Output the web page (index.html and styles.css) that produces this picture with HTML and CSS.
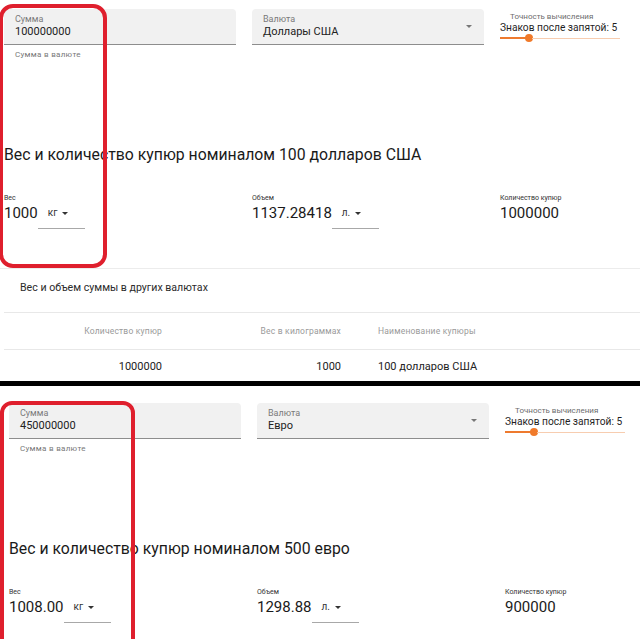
FILE: index.html
```html
<!DOCTYPE html>
<html lang="ru">
<head>
<meta charset="utf-8">
<title>Вес купюр</title>
<link rel="stylesheet" href="styles.css">
</head>
<body>
<div class="page">
  <section class="screen screen-a">
    <div class="form-row">
      <div class="col">
        <div class="field">
          <div class="field-text">
            <div class="field-label">Сумма</div>
            <div class="field-value">100000000</div>
          </div>
        </div>
        <div class="helper">Сумма в валюте</div>
      </div>
      <div class="col">
        <div class="field">
          <div class="field-text">
            <div class="field-label">Валюта</div>
            <div class="field-value">Доллары США</div>
          </div>
          <span class="arrow"></span>
        </div>
      </div>
      <div class="col col-slider">
        <div class="slider-label">Точность вычисления</div>
        <div class="slider-title">Знаков после запятой: 5</div>
        <div class="slider">
          <div class="track-active"></div>
          <div class="thumb"></div>
          <div class="track-rest"></div>
        </div>
      </div>
    </div>
    <h2 class="heading">Вес и количество купюр номиналом 100 долларов США</h2>
    <div class="results">
      <div class="result">
        <div class="r-label">Вес</div>
        <div class="r-line"><span class="r-value">1000</span><span class="unit">кг<span class="caret"></span></span></div>
      </div>
      <div class="result">
        <div class="r-label">Объем</div>
        <div class="r-line"><span class="r-value">1137.28418</span><span class="unit">л.<span class="caret"></span></span></div>
      </div>
      <div class="result">
        <div class="r-label">Количество купюр</div>
        <div class="r-line"><span class="r-value">1000000</span></div>
      </div>
    </div>
    <div class="others">
      <div class="others-title">Вес и объем суммы в других валютах</div>
      <table class="table">
        <thead>
          <tr><th class="c1">Количество купюр</th><th class="c2">Вес в килограммах</th><th class="c3">Наименование купюры</th></tr>
        </thead>
        <tbody>
          <tr><td class="c1">1000000</td><td class="c2">1000</td><td class="c3">100 долларов США</td></tr>
        </tbody>
      </table>
    </div>
  </section>
  <div class="black-bar"></div>
  <section class="screen screen-b">
    <div class="form-row">
      <div class="col">
        <div class="field">
          <div class="field-text">
            <div class="field-label">Сумма</div>
            <div class="field-value">450000000</div>
          </div>
        </div>
        <div class="helper">Сумма в валюте</div>
      </div>
      <div class="col">
        <div class="field">
          <div class="field-text">
            <div class="field-label">Валюта</div>
            <div class="field-value">Евро</div>
          </div>
          <span class="arrow"></span>
        </div>
      </div>
      <div class="col col-slider">
        <div class="slider-label">Точность вычисления</div>
        <div class="slider-title">Знаков после запятой: 5</div>
        <div class="slider">
          <div class="track-active"></div>
          <div class="thumb"></div>
          <div class="track-rest"></div>
        </div>
      </div>
    </div>
    <h2 class="heading">Вес и количество купюр номиналом 500 евро</h2>
    <div class="results">
      <div class="result">
        <div class="r-label">Вес</div>
        <div class="r-line"><span class="r-value">1008.00</span><span class="unit">кг<span class="caret"></span></span></div>
      </div>
      <div class="result">
        <div class="r-label">Объем</div>
        <div class="r-line"><span class="r-value">1298.88</span><span class="unit">л.<span class="caret"></span></span></div>
      </div>
      <div class="result">
        <div class="r-label">Количество купюр</div>
        <div class="r-line"><span class="r-value">900000</span></div>
      </div>
    </div>
  </section>
  <div class="mark mark-a"></div>
  <div class="mark mark-b"></div>
</div>
</body>
</html>
```
FILE: styles.css
```css
html, body {
  margin: 0;
  padding: 0;
  background: #ffffff;
}
body {
  font-family: Roboto, "Noto Sans", "Liberation Sans", sans-serif;
  color: #212121;
  overflow: hidden;
}
.page {
  position: relative;
  width: 640px;
  height: 639px;
  overflow: hidden;
}
.screen {
  overflow: hidden;
}
.screen-a {
  height: 381px;
  padding-left: 4px;
}
.screen-b {
  height: 253px;
  padding-left: 9px;
}
.black-bar {
  height: 5px;
  background: #000;
}
.form-row {
  display: flex;
  align-items: flex-start;
  margin-top: 9px;
}
.screen-b .form-row {
  margin-top: 17px;
}
.col {
  width: 248px;
  flex: none;
}
.col-slider {
  width: 130px;
  padding-top: 3px;
}
.field {
  width: 232px;
  height: 35px;
  box-sizing: content-box;
  background: #f1f1f1;
  border-bottom: 1px solid #8d8d8d;
  border-radius: 4px 4px 0 0;
  display: flex;
  align-items: center;
}
.field-text {
  flex: 1;
  padding: 0 11px;
  align-self: flex-start;
  padding-top: 5px;
}
.field-label {
  font-size: 9px;
  line-height: 10px;
  color: #7a7a7a;
}
.field-value {
  font-size: 11px;
  line-height: 14px;
  margin-top: 1px;
  color: #222;
}
.arrow {
  width: 0;
  height: 0;
  border-left: 3px solid transparent;
  border-right: 3px solid transparent;
  border-top: 3px solid #777;
  margin-right: 12px;
}
.helper {
  font-size: 8px;
  line-height: 9px;
  margin-top: 5px;
  padding-left: 11px;
  color: #777;
  letter-spacing: 0.3px;
}
.slider-label {
  font-size: 8px;
  line-height: 10px;
  padding-left: 10px;
  color: #6d6d6d;
}
.slider-title {
  font-size: 10.2px;
  line-height: 12px;
  color: #1f1f1f;
}
.slider {
  display: flex;
  align-items: center;
  width: 120px;
  height: 8px;
  margin-top: 0;
}
.track-active {
  width: 26px;
  height: 2px;
  background: #ee7a2e;
}
.thumb {
  width: 8px;
  height: 8px;
  border-radius: 50%;
  background: #f07a2a;
  margin-left: -1px;
}
.track-rest {
  flex: 1;
  height: 1px;
  background: #f7cdb0;
  margin-left: -1px;
}
.heading {
  margin: 86px 0 0;
  font-size: 15.8px;
  line-height: 20px;
  font-weight: 400;
  color: #1a1a1a;
}
.results {
  display: flex;
  margin-top: 29px;
}
.result {
  width: 248px;
  flex: none;
}
.r-label {
  font-size: 7px;
  line-height: 8px;
  color: #333;
}
.r-line {
  display: flex;
  align-items: flex-start;
  margin-top: 2px;
}
.r-value {
  font-size: 15px;
  line-height: 18px;
  color: #1a1a1a;
}
.unit {
  display: flex;
  align-items: center;
  width: 37px;
  height: 12px;
  padding: 3px 0 9px 10px;
  border-bottom: 1px solid #a8a8a8;
  font-size: 10px;
  line-height: 12px;
  color: #333;
}
.caret {
  width: 0;
  height: 0;
  border-left: 3px solid transparent;
  border-right: 3px solid transparent;
  border-top: 3px solid #333;
  margin-left: 5px;
}
.others {
  margin: 39px 0 0 -4px;
  border-top: 1px solid #ececec;
}
.others-title {
  padding: 12px 0 0 20px;
  font-size: 10.6px;
  line-height: 14px;
  color: #2b2b2b;
}
.table {
  margin: 17px 0 0 4px;
  width: 636px;
  border-collapse: collapse;
}
.table th,
.table td {
  padding: 0;
  border-bottom: 1px solid #e8e8e8;
  font-weight: 400;
}
.table th {
  height: 36px;
  font-size: 8.5px;
  color: #9a9a9a;
  letter-spacing: 0.2px;
  border-top: 1px solid #e8e8e8;
}
.table td {
  height: 33px;
  font-size: 11px;
  color: #222;
  border-bottom: none;
}
.c1 {
  width: 158px;
  padding-right: 16px !important;
  text-align: right;
}
.c2 {
  width: 163px;
  padding-right: 16px !important;
  text-align: right;
}
.c3 {
  padding-left: 21px !important;
  text-align: left;
}
.mark {
  position: absolute;
  border: 4px solid #df1f2d;
  border-radius: 14px;
  box-sizing: border-box;
}
.mark-a {
  left: -1px;
  top: 4px;
  width: 108px;
  height: 264px;
}
.mark-b {
  left: 0;
  top: 401px;
  width: 135px;
  height: 260px;
  border-radius: 12px;
}
```
